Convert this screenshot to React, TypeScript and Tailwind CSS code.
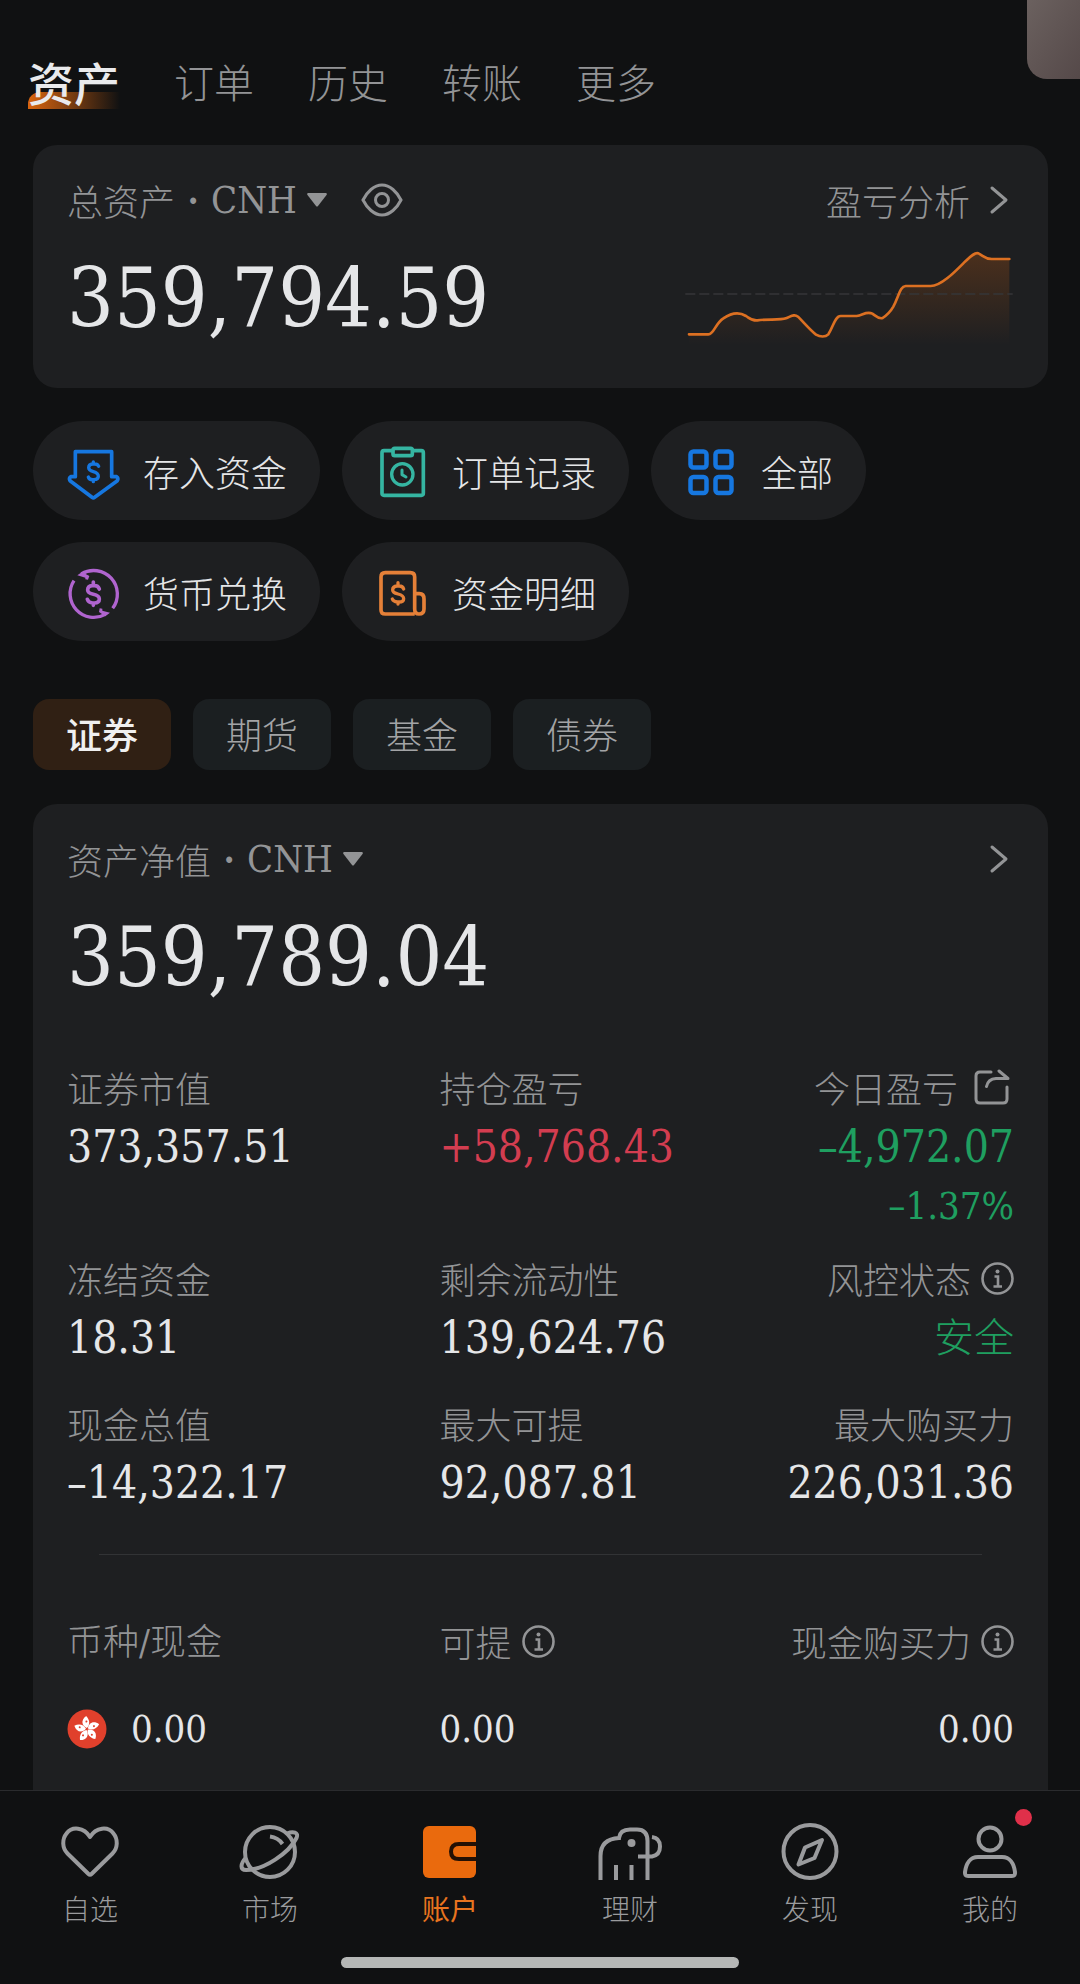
import React from 'react';

interface IconProps {
  className?: string;
}

interface Stat {
  label: string;
  value: string;
  tone?: 'up' | 'down';
  note?: string;
  icon?: 'share' | 'info';
}

const tabs = ['资产', '订单', '历史', '转账', '更多'];
const markets = ['证券', '期货', '基金', '债券'];

const stats: Stat[] = [
  { label: '证券市值', value: '373,357.51' },
  { label: '持仓盈亏', value: '+58,768.43', tone: 'up' },
  { label: '今日盈亏', value: '–4,972.07', tone: 'down', note: '–1.37%', icon: 'share' },
  { label: '冻结资金', value: '18.31' },
  { label: '剩余流动性', value: '139,624.76' },
  { label: '风控状态', value: '安全', tone: 'down', icon: 'info' },
  { label: '现金总值', value: '–14,322.17' },
  { label: '最大可提', value: '92,087.81' },
  { label: '最大购买力', value: '226,031.36' },
];

const numberFont = "font-['DejaVu_Serif_Condensed','DejaVu_Serif','Noto_Sans_CJK_SC',serif]";

const EyeIcon = () => (
  <svg className="w-[42px] h-[34px]" viewBox="0 0 42 34" fill="none" stroke="currentColor" strokeWidth="3">
    <path d="M2 17C6 9 13 2 21 2S36 9 40 17C36 25 29 32 21 32S6 25 2 17Z" />
    <circle cx="21" cy="17" r="6.500" />
  </svg>
);

const ChevronIcon = () => (
  <svg className="w-6 h-7" viewBox="0 0 24 28" fill="none" stroke="currentColor" strokeWidth="3" strokeLinecap="round" strokeLinejoin="round" overflow="visible">
    <path d="M2 2L16 14L2 26" />
  </svg>
);

const CaretIcon = () => (
  <svg className="w-5 h-[14px] pointer-events-none" viewBox="0 0 20 14" fill="currentColor">
    <path d="M1 0H19Q20.500 .5 19.500 2L11 13Q10 14 9 13L.5 2Q-.5 .5 1 0Z" />
  </svg>
);

const InfoIcon = () => (
  <svg className="w-[33px] h-[33px]" viewBox="0 0 33 33" fill="none" stroke="currentColor" strokeWidth="2.600">
    <circle cx="16.500" cy="16.500" r="15" />
    <circle cx="16.500" cy="9.500" r="2" fill="currentColor" stroke="none" />
    <path d="M13.500 14.500H17V24.500M12.500 24.500H21" />
  </svg>
);

const ShareIcon = () => (
  <svg className="w-9 h-9" viewBox="0 0 36 36" fill="none" stroke="currentColor" strokeWidth="3" strokeLinecap="round" strokeLinejoin="round">
    <path d="M17 3H6Q2 3 2 7V30Q2 34 6 34H29Q33 34 33 30V18" />
    <path d="M12.500 17.500Q14 10 22 9.500H34L25 2" />
  </svg>
);

const DepositIcon = () => (
  <svg className="w-[52px] h-[52px]" viewBox="21 43 156 156" fill="none" stroke="#1677e0" strokeWidth="11" strokeLinejoin="round" strokeLinecap="round" overflow="visible">
    <path d="M46 63H155V138H170Q176 142 172 150L104 200Q100 203 96 200L30 150Q26 142 32 138H46Z" />
    <path strokeWidth="10" d="M116 107Q113 100 104 100H98Q86 101 86 111Q86 119 100 123Q115 127 115 137Q115 147 102 147H98Q87 147 85 139M100 94V100M100 147V153" />
  </svg>
);

const OrderIcon = () => (
  <svg className="w-[52px] h-[52px]" viewBox="948 43 156 156" fill="none" stroke="#35b5a2" strokeWidth="11" strokeLinejoin="round" strokeLinecap="round" overflow="visible">
    <path d="M998 60H972Q966 60 966 66V188Q966 194 972 194H1084Q1090 194 1090 188V66Q1090 60 1084 60H1060" />
    <rect x="999" y="53" width="58" height="22" rx="5" />
    <circle cx="1027" cy="131" r="32" strokeWidth="10" />
    <path strokeWidth="9" d="M1026 118V132L1038 139" />
  </svg>
);

const GridIcon = () => (
  <svg className="w-[52px] h-[52px]" viewBox="0 0 52 52" fill="none" stroke="#1677e0" strokeWidth="4.500">
    <rect x="5.500" y="6.500" width="16" height="16" rx="3" />
    <rect x="30.500" y="6.500" width="16" height="16" rx="3" />
    <rect x="5.500" y="32" width="16" height="16" rx="3" />
    <rect x="30.500" y="32" width="16" height="16" rx="3" />
  </svg>
);

const ExchangeIcon = () => (
  <svg className="w-[52px] h-[52px]" viewBox="21 407 156 156" fill="none" stroke="#b064cf" strokeWidth="10" overflow="visible">
    <path d="M42 451A71 71 0 0 0 136 552M158 534A71 71 0 0 0 64 431" />
    <path fill="#b064cf" stroke="none" d="M52 435L66 425L88 437L84 448L76 447V442ZM150 547L136 558L117 545L119 534L127 535V541Z" />
    <path strokeWidth="11" strokeLinecap="round" d="M118 476Q114 466 104 466H97Q83 467 83 479Q83 488 100 492Q118 496 118 506Q118 518 103 518H98Q85 517 82 507M100 455V466M100 518V525" />
  </svg>
);

const DetailIcon = () => (
  <svg className="w-[52px] h-[52px]" viewBox="948 407 156 156" fill="none" stroke="#e58038" strokeWidth="11" strokeLinejoin="round" overflow="visible">
    <path d="M1064 551H976Q963 551 963 538V440Q963 427 976 427H1051Q1064 427 1064 440V536Q1064 551 1077 551Q1092 551 1092 536V506Q1092 490 1078 490H1064" />
    <path strokeWidth="10" strokeLinecap="round" d="M1031 476Q1028 467 1018 467H1011Q998 468 998 479Q998 487 1014 491Q1031 495 1031 505Q1031 515 1017 515H1012Q1000 514 997 506M1014 457V467M1014 515V521" />
  </svg>
);

const FlagIcon = () => (
  <svg className="w-10 h-10" viewBox="0 0 40 40">
    <circle cx="20" cy="20" r="19.500" fill="#e0402c" />
    {[0, 72, 144, 216, 288].map((angle) => (
      <g key={angle} transform={`rotate(${angle - 8} 20 20)`}>
        <path fill="#fff" d="M20 19C15 16 15 10 21 7C24 11 24 16 20 19Z" />
        <circle cx="20.500" cy="12.500" r="1" fill="#e0402c" />
      </g>
    ))}
  </svg>
);

const actions = [
  { label: '存入资金', Icon: DepositIcon },
  { label: '订单记录', Icon: OrderIcon },
  { label: '全部', Icon: GridIcon },
  { label: '货币兑换', Icon: ExchangeIcon },
  { label: '资金明细', Icon: DetailIcon },
];

const NavSvg: React.FC<{ children: React.ReactNode }> = ({ children }) => (
  <svg className="w-16 h-16" viewBox="0 0 64 64" fill="none" stroke="currentColor" strokeWidth="4" overflow="visible">
    {children}
  </svg>
);

const navItems = [
  {
    label: '自选',
    icon: (
      <NavSvg>
        <path strokeLinejoin="round" d="M32 18C26 8 14 7 8.500 14.500C4 20 4 29 9.500 34.500L30.500 55Q32 56.500 33.500 55L54.500 34.500C60 29 60 20 55.500 14.500C50 7 38 8 32 18Z" />
      </NavSvg>
    ),
  },
  {
    label: '市场',
    icon: (
      <NavSvg>
        <circle cx="32" cy="33" r="25" />
        <path d="M8 38.500C2 45 2 51 8 51C26 51 51 34 58.500 19C61 13 55 12 49 14.500" />
        <path d="M32 17.500Q40 18.500 44.500 25" />
      </NavSvg>
    ),
  },
  {
    label: '账户',
    active: true,
    icon: (
      <NavSvg>
        <rect x="5" y="7" width="53" height="52" rx="6" fill="#ea6a0d" stroke="none" />
        <path stroke="#241004" d="M58 25H41Q33 25 33 32.500Q33 40 41 40H58" />
      </NavSvg>
    ),
  },
  {
    label: '理财',
    icon: (
      <NavSvg>
        <path d="M2.500 61V37Q2.500 20 21 19Q22 10.500 32 10.500H39Q49.500 10.500 49.500 22V61M18 46V61M33.500 46V61" />
        <path d="M40 37.500H54Q62 36 62 27.500Q62 19 54 18" />
        <circle cx="33.500" cy="24" r="4" fill="currentColor" stroke="none" />
      </NavSvg>
    ),
  },
  {
    label: '发现',
    icon: (
      <NavSvg>
        <circle cx="32" cy="32.500" r="26.500" />
        <path strokeLinejoin="round" d="M44 21L36.500 39L20.500 45.500L27 28.500Z" />
      </NavSvg>
    ),
  },
  {
    label: '我的',
    badge: true,
    icon: (
      <NavSvg>
        <circle cx="32" cy="20" r="11.500" />
        <path d="M20 38H44C52 38 56 45 57 53Q57.500 57 54 57H10Q6.500 57 7 53C8 45 12 38 20 38Z" />
      </NavSvg>
    ),
  },
];

const CurrencySelect: React.FC<{ id: string; label: string }> = ({ id, label }) => (
  <div className="flex items-center">
    <label htmlFor={id}>{label}</label>
    <span className={`w-9 text-center font-bold ${numberFont}`}>·</span>
    <select id={id} defaultValue="CNH" className={`appearance-none bg-transparent field-sizing-content outline-none text-[38px] ${numberFont}`}>
      <option>CNH</option>
    </select>
    <span className="ml-2.5"><CaretIcon /></span>
  </div>
);

const Sparkline: React.FC<IconProps> = ({ className }) => {
  const line =
    'M147 1003H205C222 1003 226 970 250 955C275 938 300 937 318 948C332 957 338 963 352 961C380 956 420 962 438 955C452 950 462 940 474 950C490 966 510 990 528 1004C540 1011 556 1012 565 1003C580 980 585 948 602 948H650C668 946 680 932 697 941C708 948 716 958 728 954C740 946 752 934 760 920C778 885 780 859 797 858H872C905 858 950 810 975 785C990 771 1003 757 1015 760C1030 767 1035 777 1055 777H1108';
  return (
    <svg className={className} viewBox="132 738 990 300" fill="none">
      <defs>
        <linearGradient id="profitFill" x1="0" y1="0" x2="0" y2="1">
          <stop offset="0" stopColor="#ea6a0d" stopOpacity="0.220" />
          <stop offset="1" stopColor="#ea6a0d" stopOpacity="0" />
        </linearGradient>
      </defs>
      <path d={`${line}V1035H147Z`} fill="url(#profitFill)" />
      <path d="M136 882H1118" stroke="#363638" strokeWidth="4" strokeDasharray="30 12" />
      <path d={line} stroke="#dc7022" strokeWidth="8" strokeLinecap="round" />
    </svg>
  );
};

const StatCell: React.FC<{ stat: Stat; right: boolean }> = ({ stat, right }) => (
  <div className={right ? 'flex flex-col items-end' : 'flex flex-col items-start'}>
    <div className={`flex items-center text-[36px] leading-[60px] text-[#939496] ${stat.icon === 'share' ? 'gap-4 pr-1' : 'gap-2.5'}`}>
      {stat.label}
      {stat.icon === 'share' && <button aria-label="分享"><ShareIcon /></button>}
      {stat.icon === 'info' && <button aria-label="说明"><InfoIcon /></button>}
    </div>
    <div
      className={`leading-[60px] ${numberFont} ${stat.value === '安全' ? 'text-[40px]' : 'text-[44px]'} ${
        stat.tone === 'up' ? 'text-[#d33d50]' :
        stat.tone === 'down' ? 'text-[#1f9f60]' :
        'text-[#e5e6e8]'
      }`}
    >
      {stat.value}
    </div>
    {stat.note && <div className={`text-[38px] leading-[58px] -mb-3 text-[#1f9f60] ${numberFont}`}>{stat.note}</div>}
  </div>
);

export default function App() {
  const [tab, setTab] = React.useState('资产');
  const [market, setMarket] = React.useState('证券');

  return (
    <div className="relative min-h-screen overflow-hidden flex flex-col bg-[#101112] text-[#939496] font-light font-['Noto_Sans_CJK_SC',sans-serif]">
      {/* floating window docked to the screen edge */}
      <div className="absolute top-0 right-0 w-[53px] h-[79px] rounded-bl-[20px] bg-linear-to-br from-[#6b615f] to-[#554949]" />

      <header className="flex items-center gap-[54px] pt-[53px] px-7">
        {tabs.map((name) => (
          <button
            key={name}
            onClick={() => setTab(name)}
            className={name === tab
              ? 'relative isolate text-[46px] leading-[56px] font-medium text-[#e9eaec]'
              : 'text-[40px] leading-[56px]'}
          >
            {name === tab && (
              <span className="absolute -z-10 left-0 bottom-0 w-full h-[17px] rounded-tl-xl bg-linear-to-r from-[#d9650f] to-transparent" />
            )}
            {name}
          </button>
        ))}
      </header>

      <main className="flex-1 flex flex-col pl-[33px] pr-8 pt-9">
        <section className="rounded-3xl bg-[#1e1f21] px-[34px] pt-[26px] pb-9">
          <div className="flex items-center justify-between text-[36px] leading-[58px]">
            <div className="flex items-center gap-[34px]">
              <CurrencySelect id="total-currency" label="总资产" />
              <button aria-label="隐藏金额"><EyeIcon /></button>
            </div>
            <a href="#analysis" className="flex items-center gap-5">
              盈亏分析
              <ChevronIcon />
            </a>
          </div>
          <div className="flex items-start justify-between mt-[17px]">
            <div className={`text-[82px] leading-[106px] text-[#e5e6e8] ${numberFont}`}>359,794.59</div>
            <Sparkline className="w-[330px] h-[100px]" />
          </div>
        </section>

        <section className="flex flex-wrap gap-[22px] mt-[33px]">
          {actions.map(({ label, Icon }) => (
            <button key={label} className="flex items-center gap-6 h-[99px] pl-[34px] pr-[33px] rounded-full bg-[#1e1f21] text-[36px] text-[#e5e6e8]">
              <Icon />
              {label}
            </button>
          ))}
        </section>

        <section className="flex gap-[22px] mt-[58px]">
          {markets.map((name) => (
            <button
              key={name}
              onClick={() => setMarket(name)}
              className={`h-[71px] px-[33px] pb-1 rounded-2xl text-[36px] ${
                name === market ? 'bg-[#302014] text-[#efefef] font-medium' : 'bg-[#1b1f21] text-[#a3a4a6]'
              }`}
            >
              {name}
            </button>
          ))}
        </section>

        <section className="flex-1 mt-[34px] rounded-t-3xl bg-[#1e1f21] px-[34px] pt-[26px] pb-8">
          <div className="flex items-center justify-between text-[36px] leading-[58px]">
            <CurrencySelect id="net-currency" label="资产净值" />
            <a href="#detail" aria-label="资产详情"><ChevronIcon /></a>
          </div>
          <div className={`mt-[17px] text-[82px] leading-[106px] text-[#e5e6e8] ${numberFont}`}>359,789.04</div>

          <div className="grid grid-cols-[59fr_45fr_46fr] gap-y-[25px] mt-[46px]">
            {stats.map((stat, i) => (
              <StatCell key={stat.label} stat={stat} right={i % 3 === 2} />
            ))}
          </div>

          <hr className="mx-8 mt-[41px] border-[#323335]" />

          <table className="w-full table-fixed mt-[55px] text-[36px] leading-[58px]">
            <colgroup>
              <col className="w-59/150" />
              <col />
              <col className="w-46/150" />
            </colgroup>
            <thead>
              <tr>
                <th className="text-left font-light">币种<span className={numberFont}>/</span>现金</th>
                <th className="font-light">
                  <div className="flex items-center gap-2.5">可提<InfoIcon /></div>
                </th>
                <th className="font-light">
                  <div className="flex items-center justify-end gap-2.5">现金购买力<InfoIcon /></div>
                </th>
              </tr>
            </thead>
            <tbody className={`text-[38px] text-[#e5e6e8] ${numberFont}`}>
              <tr>
                <td className="pt-7">
                  <div className="flex items-center gap-6"><FlagIcon />0.00</div>
                </td>
                <td className="pt-7">0.00</td>
                <td className="pt-7 text-right">0.00</td>
              </tr>
            </tbody>
          </table>
        </section>
      </main>

      <nav className="border-t border-[#2a2b2d] bg-[#101112] pt-7 pb-4">
        <div className="grid grid-cols-6">
          {navItems.map((item) => (
            <a
              key={item.label}
              href="#"
              className={`flex flex-col items-center gap-1.5 text-[28px] leading-[38px] ${item.active ? 'text-[#e8741f] font-normal' : 'text-[#9a9b9d]'}`}
            >
              <span className="relative">
                {item.icon}
                {item.badge && <span className="absolute -top-2.5 -right-2.5 w-[17px] h-[17px] rounded-full bg-[#e0304a]" />}
              </span>
              {item.label}
            </a>
          ))}
        </div>
        <div className="mx-auto mt-[30px] w-[398px] h-[11px] rounded-full bg-[#b5b7b6]" />
      </nav>
    </div>
  );
}
